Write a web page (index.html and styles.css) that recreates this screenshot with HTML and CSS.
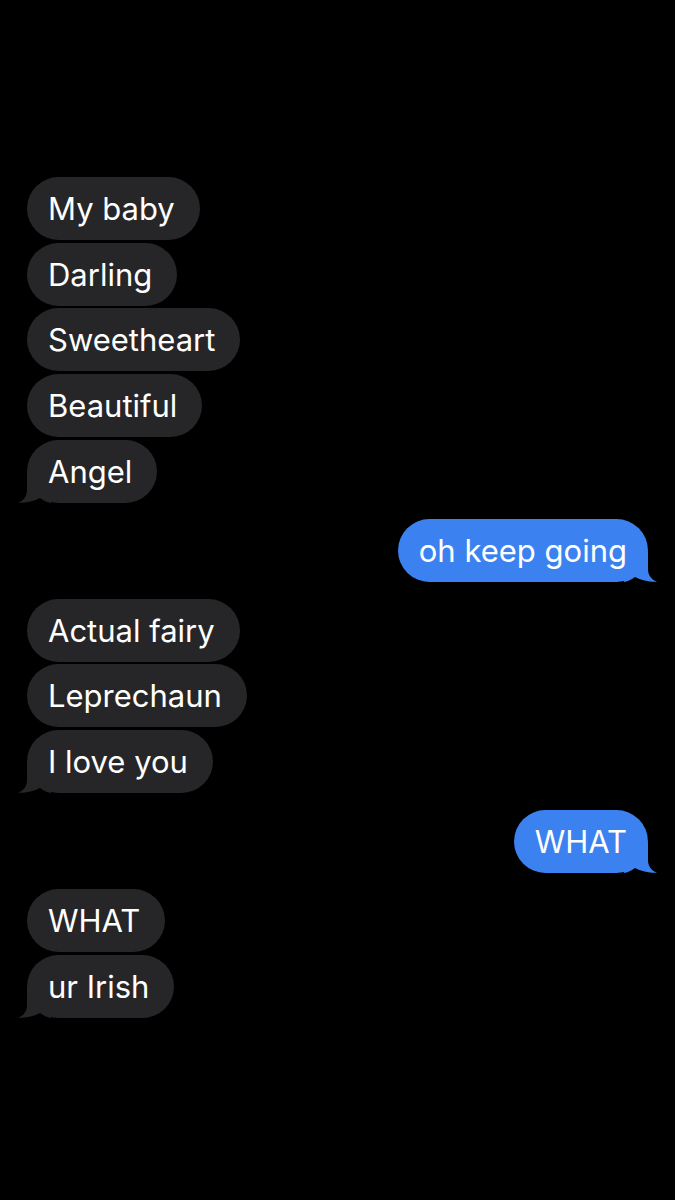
FILE: index.html
```html
<!DOCTYPE html>
<html lang="en">
<head>
<meta charset="utf-8">
<title>Messages</title>
<link rel="stylesheet" href="styles.css">
</head>
<body>
<main class="thread">
  <section class="group in">
    <div class="bubble">My baby</div>
    <div class="bubble">Darling</div>
    <div class="bubble">Sweetheart</div>
    <div class="bubble">Beautiful</div>
    <div class="bubble tail">Angel<svg class="tail-svg" viewBox="0 0 34 30" aria-hidden="true"><path d="M10 0 L10 17 C10 23 7 27.5 1 29.8 C8 30.3 17 28 23 25 C27 28 31 29.5 34 30 L34 0 Z"/></svg></div>
  </section>
  <section class="group out">
    <div class="bubble tail">oh keep going<svg class="tail-svg" viewBox="0 0 34 30" aria-hidden="true"><path d="M24 0 L24 17 C24 23 27 27.5 33 29.8 C26 30.3 17 28 11 25 C7 28 3 29.5 0 30 L0 0 Z"/></svg></div>
  </section>
  <section class="group in">
    <div class="bubble">Actual fairy</div>
    <div class="bubble">Leprechaun</div>
    <div class="bubble tail">I love you<svg class="tail-svg" viewBox="0 0 34 30" aria-hidden="true"><path d="M10 0 L10 17 C10 23 7 27.5 1 29.8 C8 30.3 17 28 23 25 C27 28 31 29.5 34 30 L34 0 Z"/></svg></div>
  </section>
  <section class="group out">
    <div class="bubble tail">WHAT<svg class="tail-svg" viewBox="0 0 34 30" aria-hidden="true"><path d="M24 0 L24 17 C24 23 27 27.5 33 29.8 C26 30.3 17 28 11 25 C7 28 3 29.5 0 30 L0 0 Z"/></svg></div>
  </section>
  <section class="group in">
    <div class="bubble">WHAT</div>
    <div class="bubble tail">ur Irish<svg class="tail-svg" viewBox="0 0 34 30" aria-hidden="true"><path d="M10 0 L10 17 C10 23 7 27.5 1 29.8 C8 30.3 17 28 23 25 C27 28 31 29.5 34 30 L34 0 Z"/></svg></div>
  </section>
</main>
</body>
</html>
```
FILE: styles.css
```css
html, body {
  margin: 0;
  padding: 0;
  background: #000;
}
body {
  width: 675px;
  height: 1200px;
  overflow: hidden;
  font-family: Inter, "Noto Sans", "Liberation Sans", sans-serif;
}
.thread {
  display: flex;
  flex-direction: column;
  gap: 16.5px;
  padding: 177px 27px 0 27px;
}
.group {
  display: flex;
  flex-direction: column;
  gap: 2.7px;
}
.group.in { align-items: flex-start; }
.group.out { align-items: flex-end; }
.bubble {
  position: relative;
  height: 63px;
  line-height: 63px;
  padding: 0 25px 0 21px;
  border-radius: 31.5px;
  font-size: 31px;
  color: #fff;
  white-space: nowrap;
  z-index: 0;
}
.in .bubble { background: #262628; }
.out .bubble {
  background: #3b82f0;
  padding: 0 21px;
}
.tail-svg {
  position: absolute;
  bottom: 0;
  width: 34px;
  height: 30px;
  z-index: -1;
}
.in .tail-svg { left: -10px; fill: #262628; }
.out .tail-svg { right: -10px; fill: #3b82f0; }
```
